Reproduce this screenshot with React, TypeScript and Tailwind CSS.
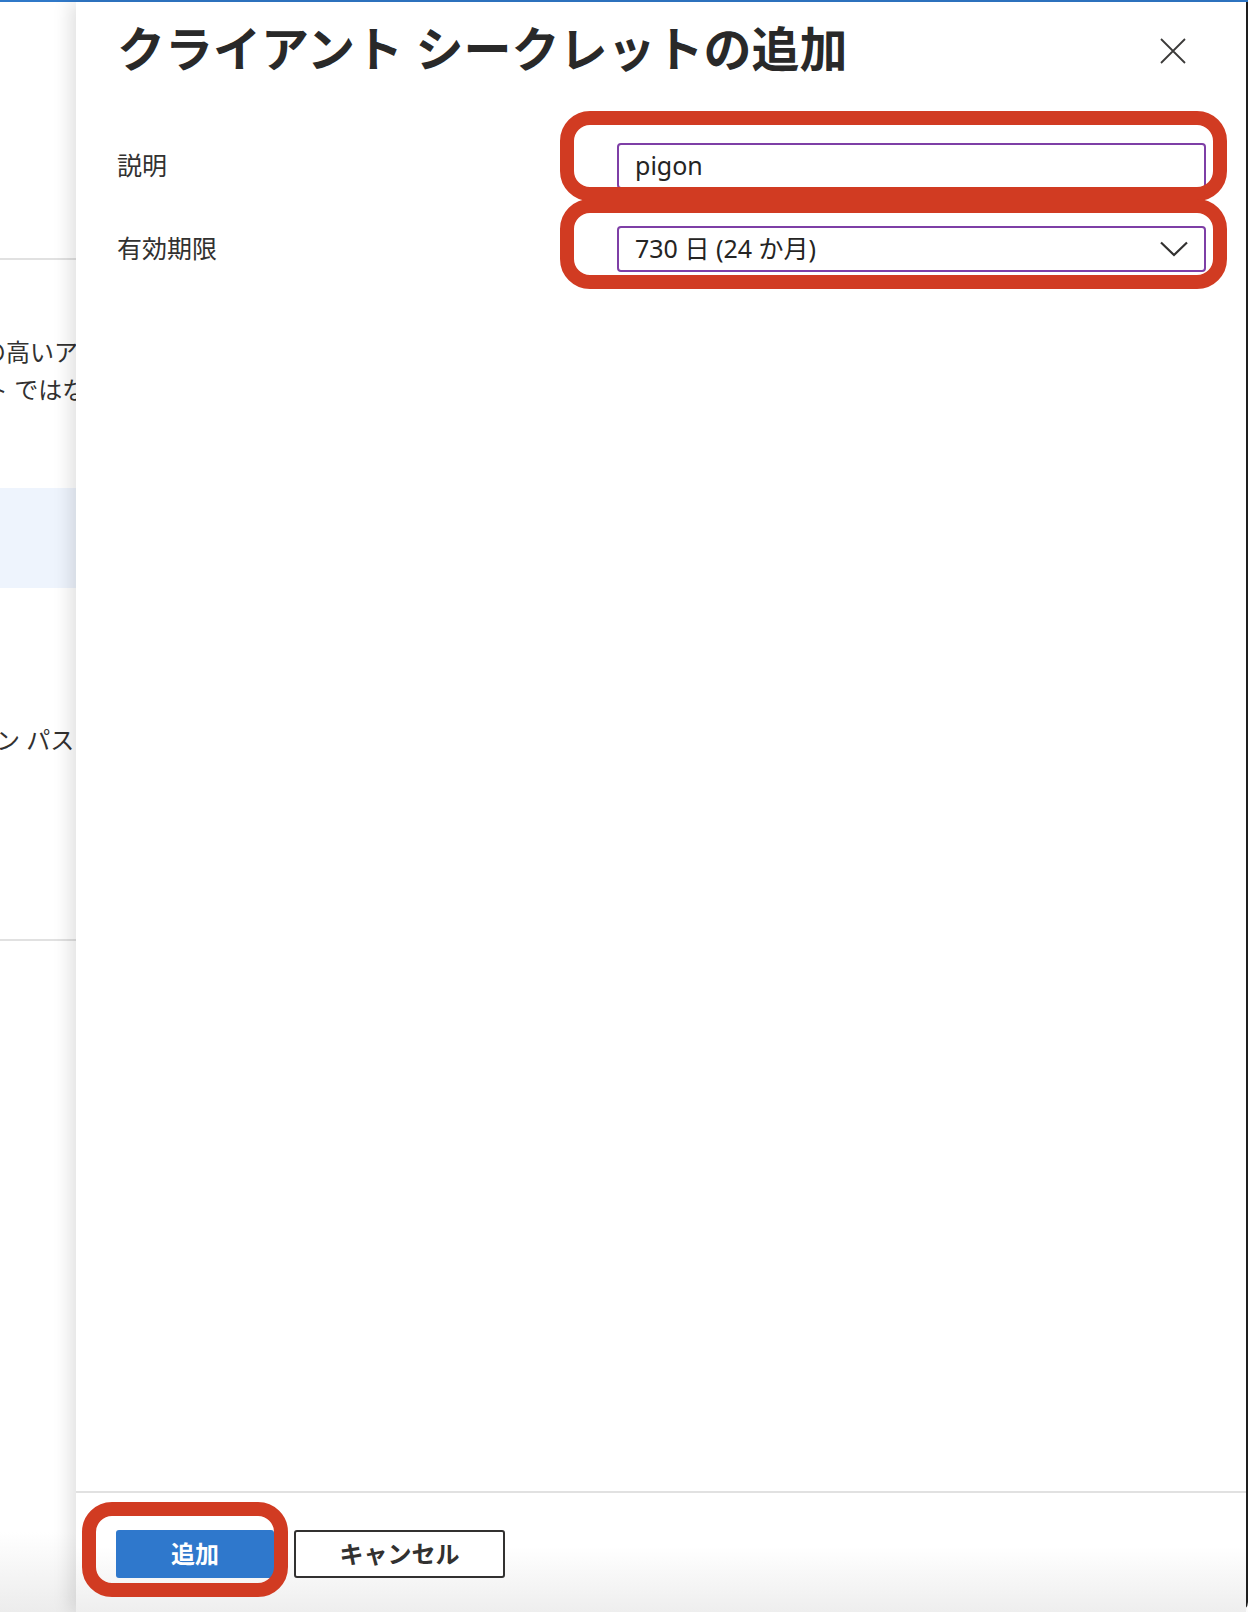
import React from 'react';

const font = { fontFamily: '"Noto Sans", "Noto Sans CJK JP", sans-serif' };

function CloseIcon() {
  return (
    <svg width="26" height="26" viewBox="0 0 26 26" fill="none" stroke="#3b3a39" strokeWidth="1.8">
      <path d="M1 1 L25 25 M25 1 L1 25" />
    </svg>
  );
}

function Chevron() {
  return (
    <svg width="28" height="16" viewBox="0 0 28 16" fill="none" stroke="#323130" strokeWidth="2.2">
      <path d="M1 1.5 L14 14 L27 1.5" />
    </svg>
  );
}

// the page behind the blade, mostly hidden
function BackPage() {
  return (
    <div className="w-[76px] shrink-0 flex flex-col overflow-hidden bg-white text-[24px] text-[#323130]">
      <div className="h-[256px]" />
      <div className="h-[2px] bg-[#e1e1e1]" />
      <div className="h-[73px]" />
      <p className="whitespace-nowrap leading-[38px] -ml-[18px]">の高いアプリケーション</p>
      <p className="whitespace-nowrap leading-[38px] -ml-[16px]">ト ではなく</p>
      <div className="h-[79px]" />
      <div className="h-[100px] bg-[#eef4fd]" />
      <div className="h-[133px]" />
      <p className="whitespace-nowrap leading-[38px] -ml-[4px]">ン パスワード</p>
      <div className="h-[180px]" />
      <div className="h-[2px] bg-[#e1e1e1]" />
      <div className="flex-1" />
      <div className="h-[80px] bg-[linear-gradient(to_bottom,#ffffff,#ececec)]" />
    </div>
  );
}

export default function App() {
  return (
    <div className="w-[1248px] h-[1612px] flex flex-col bg-white overflow-hidden" style={font}>
      <div className="h-[2px] bg-[#2f78c8]" />
      <div className="flex flex-1 min-h-0">
        <BackPage />

        <div className="relative z-10 flex-1 flex flex-col bg-white border-r-2 border-[#1e1e1e] rounded-br-[10px] shadow-[-6px_0_18px_rgba(0,0,0,0.12)]">
          <div className="flex-1 pl-[41px] pr-[40px] pt-[18px]">
            <div className="flex items-center justify-between">
              <h1 className="text-[48px] leading-[58px] font-bold text-[#292929]">
                クライアント シークレットの追加
              </h1>
              <button className="mr-[20px] mt-[4px]">
                <CloseIcon />
              </button>
            </div>

            <div className="mt-[65px] grid grid-cols-[500px_1fr] gap-y-[37px] items-center">
              <label className="text-[25px] text-[#323130]">説明</label>
              <div className="h-[46px] border-2 border-[#7e3fa6] rounded-[4px] flex items-center pl-[16px] text-[25px] text-[#252423]">
                pigon
              </div>
              <label className="text-[25px] text-[#323130]">有効期限</label>
              <div className="h-[46px] border-2 border-[#7e3fa6] rounded-[4px] flex items-center justify-between pl-[16px] pr-[16px] text-[25px] text-[#252423]">
                <span>730 日 (24 か月)</span>
                <Chevron />
              </div>
            </div>
          </div>

          <div className="h-[121px] border-t-2 border-[#e1e1e1] pl-[40px] pt-[37px] flex items-start gap-[20px] bg-[linear-gradient(to_bottom,#ffffff_45%,#eeeeee)]">
            <button className="w-[158px] h-[48px] rounded-[3px] bg-[#2f78cc] text-white text-[24px] font-bold">
              追加
            </button>
            <button className="w-[211px] h-[48px] rounded-[3px] border-2 border-[#323130] bg-white text-[#323130] text-[24px] font-bold">
              キャンセル
            </button>
          </div>

          {/* red annotation outlines */}
          <div className="absolute left-[484px] top-[109px] w-[667px] h-[90px] border-[14px] border-[#d13b22] rounded-[30px] pointer-events-none" />
          <div className="absolute left-[484px] top-[197px] w-[667px] h-[90px] border-[14px] border-[#d13b22] rounded-[30px] pointer-events-none" />
          <div className="absolute left-[6px] top-[1500px] w-[206px] h-[95px] border-[14px] border-[#d13b22] rounded-[30px] pointer-events-none" />
        </div>
      </div>
    </div>
  );
}
